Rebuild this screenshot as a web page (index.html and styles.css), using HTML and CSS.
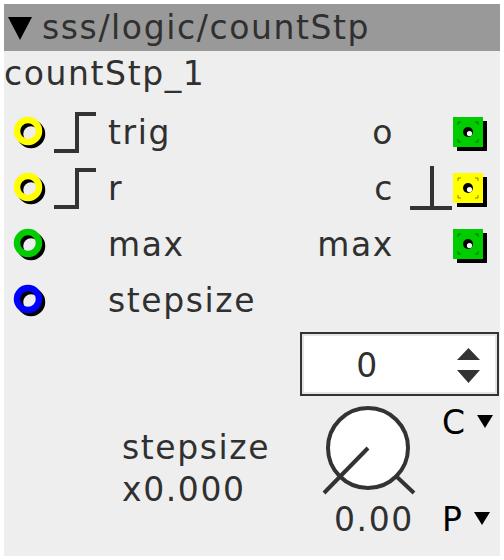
FILE: index.html
```html
<!DOCTYPE html>
<html>

<head>
    <title>countStp</title>
    <link rel="stylesheet" href="styles.css">
</head>

<body>
    <div class="obj">
        <div class="hdr">
            <svg class="collapse" width="24" height="23" viewBox="0 0 24 23"><polygon points="0,0 24,0 12,23" /></svg>
            <span>sss/logic/countStp</span>
        </div>
        <div class="inst">countStp_1</div>

        <div class="io">
            <div class="row">
                <span class="inlet"><svg width="36" height="36" viewBox="0 0 36 36"><circle class="shade" cx="21" cy="21" r="11" /><circle class="ring bool" cx="18" cy="18" r="11" /></svg></span>
                <span class="edge"><svg width="42" height="48" viewBox="0 0 42 48"><polyline points="0,44 23,44 23,7 42,7" /></svg></span>
                <span class="lbl">trig</span>
                <span class="lbl rlbl">o</span>
                <span class="redge"></span>
                <span class="outlet"><svg width="34" height="40" viewBox="0 0 34 40"><rect class="shade" x="4" y="10" width="30" height="30" /><rect class="int" x="0" y="6" width="30" height="30" /><rect class="ticks" x="5" y="11" width="20" height="20" /><circle cx="15" cy="21" r="5" /><circle class="hi" cx="16.5" cy="22.5" r="2.6" /></svg></span>
            </div>
            <div class="row">
                <span class="inlet"><svg width="36" height="36" viewBox="0 0 36 36"><circle class="shade" cx="21" cy="21" r="11" /><circle class="ring bool" cx="18" cy="18" r="11" /></svg></span>
                <span class="edge"><svg width="42" height="48" viewBox="0 0 42 48"><polyline points="0,44 23,44 23,7 42,7" /></svg></span>
                <span class="lbl">r</span>
                <span class="lbl rlbl">c</span>
                <span class="redge"><svg width="42" height="48" viewBox="0 0 42 48"><path d="M0,45 H42 M22,3 V45" /></svg></span>
                <span class="outlet"><svg width="34" height="40" viewBox="0 0 34 40"><rect class="shade" x="4" y="10" width="30" height="30" /><rect class="bool" x="0" y="6" width="30" height="30" /><rect class="ticks" x="5" y="11" width="20" height="20" /><circle cx="15" cy="21" r="5" /><circle class="hi" cx="16.5" cy="22.5" r="2.6" /></svg></span>
            </div>
            <div class="row">
                <span class="inlet"><svg width="36" height="36" viewBox="0 0 36 36"><circle class="shade" cx="21" cy="21" r="11" /><circle class="ring int" cx="18" cy="18" r="11" /></svg></span>
                <span class="edge"></span>
                <span class="lbl">max</span>
                <span class="lbl rlbl">max</span>
                <span class="redge"></span>
                <span class="outlet"><svg width="34" height="40" viewBox="0 0 34 40"><rect class="shade" x="4" y="10" width="30" height="30" /><rect class="int" x="0" y="6" width="30" height="30" /><rect class="ticks" x="5" y="11" width="20" height="20" /><circle cx="15" cy="21" r="5" /><circle class="hi" cx="16.5" cy="22.5" r="2.6" /></svg></span>
            </div>
            <div class="row">
                <span class="inlet"><svg width="36" height="36" viewBox="0 0 36 36"><circle class="shade" cx="21" cy="21" r="11" /><circle class="ring frac" cx="18" cy="18" r="11" /></svg></span>
                <span class="edge"></span>
                <span class="lbl">stepsize</span>
            </div>
        </div>

        <div class="ctrl">
            <div class="ctrl-name">stepsize<br>x0.000</div>
            <div class="ctrl-right">
                <div class="numbox">
                    <span class="num">0</span>
                    <span class="spin"><svg width="23" height="35" viewBox="0 0 23 35"><polygon points="11.5,0 23,12 0,12" /><polygon points="0,22 23,22 11.5,35" /></svg></span>
                </div>
                <div class="dial-row">
                    <div class="dial">
                        <svg width="100" height="96" viewBox="0 0 100 96">
                            <circle cx="48" cy="46" r="40" />
                            <path d="M48,46 L4,91 M77,75 L94,91" />
                        </svg>
                        <div class="dial-val">0.00</div>
                    </div>
                    <div class="modes">
                        <div class="mode">C<svg width="16" height="13" viewBox="0 0 16 13"><polygon points="0,0 16,0 8,13" /></svg></div>
                        <div class="mode mode-p">P<svg width="16" height="13" viewBox="0 0 16 13"><polygon points="0,0 16,0 8,13" /></svg></div>
                    </div>
                </div>
            </div>
        </div>
    </div>
</body>

</html>
```

FILE: styles.css
```css
body {
    margin: 4px;
    background: #fff;
    font-family: "DejaVu Sans", sans-serif;
    font-size: 33px;
    letter-spacing: 1.6px;
    color: #303030;
}

.obj {
    width: 496px;
    height: 552px;
    background: #eee;
}

.hdr {
    height: 47px;
    line-height: 47px;
    padding-left: 4px;
    background: #999;
    display: flex;
    align-items: center;
}

.collapse {
    margin: 1px 10px 0 0;
}

.inst {
    line-height: 46px;
    padding-bottom: 6px;
}

/* inlets / outlets */
.row {
    height: 56px;
    display: grid;
    grid-template-columns: 44px 54px 1fr auto 61px 34px;
    align-items: center;
    padding: 0 13px 0 6px;
}

.inlet svg,
.edge svg,
.redge svg,
.outlet svg {
    display: block;
}

.lbl {
    align-self: stretch;
    line-height: 52px;
    padding-top: 4px;
}

.rlbl {
    margin-right: -2px;
}

.redge {
    padding-left: 18px;
}

.shade {
    fill: none;
    stroke: #000;
    stroke-width: 6.5;
}

rect.shade {
    fill: #000;
    stroke: none;
}

.ring {
    fill: none;
    stroke-width: 6.5;
}

.ring.bool { stroke: #ffff00; }
.ring.int { stroke: #00cc00; }
.ring.frac { stroke: #0000ff; }

rect.bool { fill: #ffff00; }
rect.int { fill: #00cc00; }

.ticks {
    fill: none;
    stroke: #000;
    stroke-opacity: 0.45;
    stroke-width: 1;
    stroke-dasharray: 3 14 3 0;
}

.outlet circle {
    fill: #000;
}

.outlet circle.hi {
    fill: #fff;
}

.edge polyline,
.redge path {
    fill: none;
    stroke: #333;
    stroke-width: 4;
}

/* parameter */
.ctrl {
    display: grid;
    grid-template-columns: 1fr 199px;
    padding-right: 1px;
}

.ctrl-name {
    padding: 100px 0 0 118px;
    line-height: 42px;
}

.numbox {
    margin-top: 5px;
    height: 64px;
    box-sizing: border-box;
    border: 2px solid #333;
    background: #fff;
    box-shadow: inset 0 0 0 2px #e4e4e4;
    display: flex;
}

.num {
    flex: 1;
    text-align: center;
    line-height: 54px;
    padding-top: 5px;
}

.spin {
    width: 64px;
}

.spin svg {
    display: block;
    margin: 14px 0 0 24px;
    fill: #333;
}

.dial-row {
    display: flex;
}

.dial {
    margin: 6px 0 0 20px;
    width: 100px;
}

.dial svg {
    display: block;
}

.dial circle {
    fill: #fff;
    stroke: #333;
    stroke-width: 4;
}

.dial path {
    stroke: #333;
    stroke-width: 4;
}

.dial-val {
    margin-top: 4px;
    padding-left: 14px;
    line-height: 36px;
    white-space: nowrap;
}

.modes {
    margin: 9px 0 0 22px;
}

.mode {
    display: flex;
    align-items: flex-start;
    line-height: 36px;
    color: #000;
}

.mode svg {
    margin: 10px 0 0 10px;
}

.mode-p {
    margin-top: 61px;
}
```
